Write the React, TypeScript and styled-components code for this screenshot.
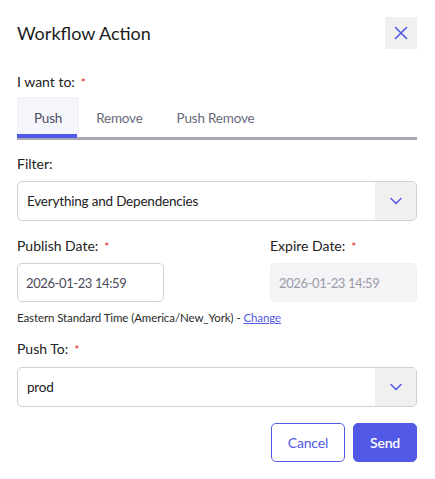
import styled, { createGlobalStyle } from 'styled-components';

const accent = '#5259e6';

const GlobalStyle = createGlobalStyle`
  html, body {
    margin: 0;
    padding: 0;
    background: #fff;
  }
  body {
    font-family: Lato, "Noto Sans", sans-serif;
    color: #1f1f1f;
  }
  * { box-sizing: border-box; }
`;

const Dialog = styled.div`
  width: 435px;
  padding: 17px 18px 16px 17px;
  display: flex;
  flex-direction: column;
`;

const TitleBar = styled.div`
  display: flex;
  justify-content: space-between;
  align-items: center;
  height: 32px;
`;

const Title = styled.h2`
  margin: 0;
  font-size: 18px;
  font-weight: 400;
  color: #1c1c1c;
`;

const CloseButton = styled.button`
  width: 32px;
  height: 32px;
  border: none;
  padding: 0;
  background: #f0f0f0;
  display: flex;
  align-items: center;
  justify-content: center;
  color: ${accent};
`;

const Label = styled.div<{ $top?: number }>`
  font-size: 14px;
  color: #222;
  margin-top: ${(p) => p.$top ?? 0}px;
  height: 18px;
  line-height: 18px;
`;

const Required = styled.span`
  color: #e02424;
  margin-left: 6px;
  font-size: 12px;
`;

const Tabs = styled.div`
  display: flex;
  margin-top: 6px;
  border-bottom: 3px solid #a9a9b6;
  height: 43px;
`;

const Tab = styled.div<{ $active?: boolean }>`
  padding: 0 16px;
  height: 40px;
  display: flex;
  align-items: center;
  justify-content: center;
  font-size: 13.5px;
  letter-spacing: -0.2px;
  color: ${(p) => (p.$active ? '#4d4d5c' : '#6a6a7c')};
  background: ${(p) => (p.$active ? '#f5f6fc' : 'transparent')};
  border: 1px solid ${(p) => (p.$active ? '#eef0fa' : 'transparent')};
  border-bottom: none;
  min-width: ${(p) => (p.$active ? '61px' : 'auto')};
  position: relative;
  &::after {
    content: '';
    display: ${(p) => (p.$active ? 'block' : 'none')};
    position: absolute;
    left: -1px;
    right: 1px;
    bottom: -1px;
    height: 4px;
    background: ${accent};
  }
`;

const Select = styled.div<{ $top?: number }>`
  margin-top: ${(p) => p.$top ?? 0}px;
  height: 40px;
  border: 1px solid #cfcfd6;
  border-radius: 5px;
  display: flex;
  overflow: hidden;
`;

const SelectValue = styled.div`
  flex: 1;
  display: flex;
  align-items: center;
  padding-left: 9px;
  font-size: 13.5px;
  letter-spacing: -0.2px;
  color: #222;
`;

const SelectArrow = styled.div`
  width: 41px;
  background: #f0f0f0;
  display: flex;
  align-items: center;
  justify-content: center;
  color: ${accent};
`;

const DateRow = styled.div`
  display: grid;
  grid-template-columns: 1fr 147px;
  margin-top: 16px;
`;

const DateField = styled.div`
  display: flex;
  flex-direction: column;
`;

const DateInput = styled.div<{ $disabled?: boolean }>`
  margin-top: 8px;
  width: 147px;
  height: 39px;
  border: 1px solid ${(p) => (p.$disabled ? '#efeff2' : '#cfcfd6')};
  background: ${(p) => (p.$disabled ? '#f4f4f6' : '#fff')};
  border-radius: 5px;
  display: flex;
  align-items: center;
  padding-left: 8px;
  font-size: 13px;
  letter-spacing: -0.4px;
  color: ${(p) => (p.$disabled ? '#9a9aab' : '#4a4a5c')};
`;

const TimeZone = styled.div`
  margin-top: 8px;
  font-size: 11.5px;
  letter-spacing: -0.1px;
  color: #2a2a2a;
  height: 16px;
  line-height: 16px;
`;

const Link = styled.a`
  color: ${accent};
  text-decoration: underline;
  cursor: pointer;
`;

const Actions = styled.div`
  display: flex;
  justify-content: flex-end;
  gap: 8px;
  margin-top: 16px;
`;

const Button = styled.button<{ $primary?: boolean }>`
  height: 39px;
  padding: 0 16px;
  border-radius: 5px;
  font-family: inherit;
  font-size: 14px;
  letter-spacing: -0.2px;
  border: 1px solid ${accent};
  background: ${(p) => (p.$primary ? accent : '#fff')};
  color: ${(p) => (p.$primary ? '#fff' : accent)};
  font-weight: ${(p) => (p.$primary ? 600 : 400)};
`;

const Chevron = () => (
  <svg width="12" height="8" viewBox="0 0 12 8" fill="none">
    <path d="M1 1.5l5 5 5-5" stroke="currentColor" strokeWidth="1.5" strokeLinecap="round" strokeLinejoin="round" />
  </svg>
);

const CloseIcon = () => (
  <svg width="14" height="14" viewBox="0 0 14 14" fill="none">
    <path d="M1.5 1.5l11 11M12.5 1.5l-11 11" stroke="currentColor" strokeWidth="1.6" strokeLinecap="round" />
  </svg>
);

export default function App() {
  return (
    <>
      <GlobalStyle />
      <Dialog>
        <TitleBar>
          <Title>Workflow Action</Title>
          <CloseButton aria-label="Close">
            <CloseIcon />
          </CloseButton>
        </TitleBar>

        <Label $top={24}>
          I want to:<Required>*</Required>
        </Label>
        <Tabs>
          <Tab $active>Push</Tab>
          <Tab>Remove</Tab>
          <Tab>Push Remove</Tab>
        </Tabs>

        <Label $top={15}>Filter:</Label>
        <Select $top={8}>
          <SelectValue>Everything and Dependencies</SelectValue>
          <SelectArrow>
            <Chevron />
          </SelectArrow>
        </Select>

        <DateRow>
          <DateField>
            <Label>
              Publish Date:<Required>*</Required>
            </Label>
            <DateInput>2026-01-23 14:59</DateInput>
          </DateField>
          <DateField>
            <Label>
              Expire Date:<Required>*</Required>
            </Label>
            <DateInput $disabled>2026-01-23 14:59</DateInput>
          </DateField>
        </DateRow>

        <TimeZone>
          Eastern Standard Time (America/New_York) - <Link>Change</Link>
        </TimeZone>

        <Label $top={14}>
          Push To:<Required>*</Required>
        </Label>
        <Select $top={9}>
          <SelectValue>prod</SelectValue>
          <SelectArrow>
            <Chevron />
          </SelectArrow>
        </Select>

        <Actions>
          <Button>Cancel</Button>
          <Button $primary>Send</Button>
        </Actions>
      </Dialog>
    </>
  );
}
